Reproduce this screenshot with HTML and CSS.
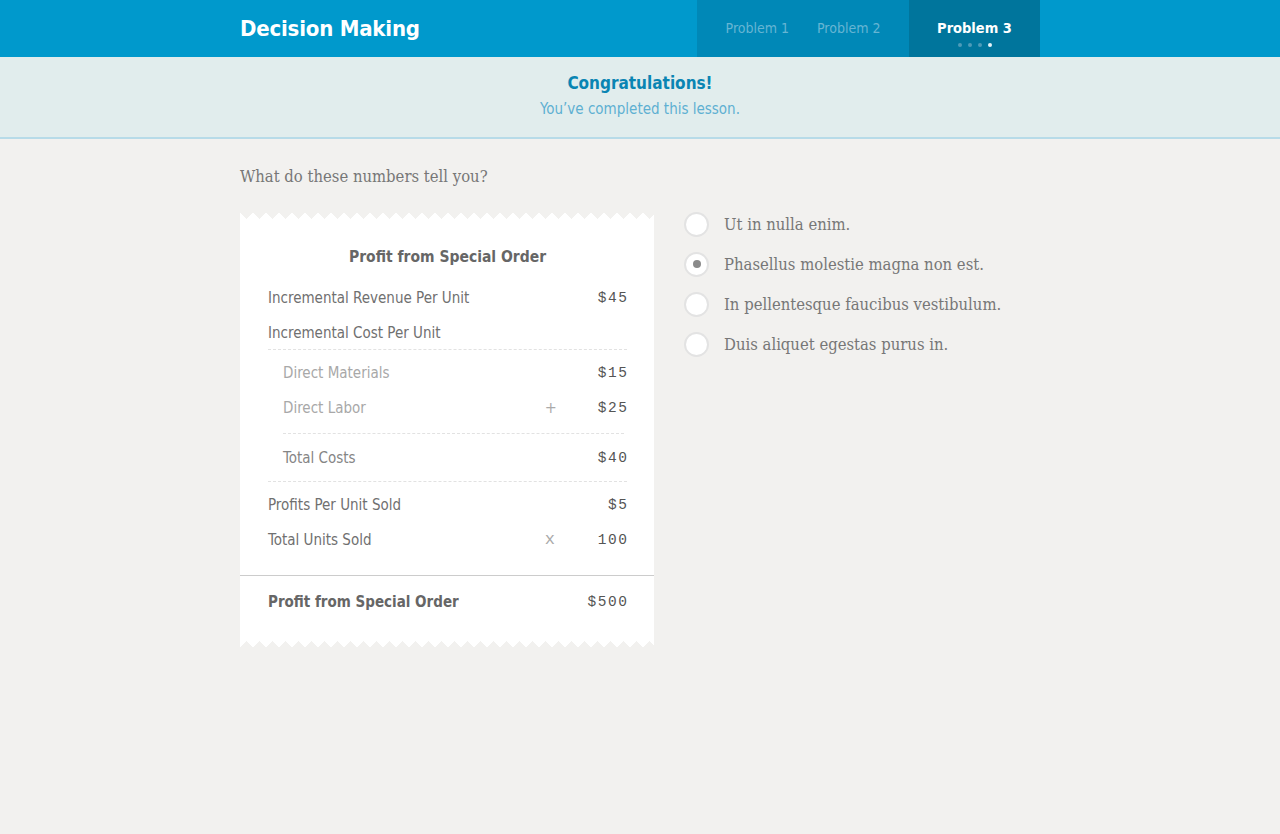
FILE: index.html
```html
<!DOCTYPE html>
<html>
<head>
<meta charset="utf-8">
<link rel="stylesheet" href="styles.css">
</head>
<body>
<header class="topbar">
  <div class="wrap topbar-inner">
    <h1 class="brand">Decision Making</h1>
    <nav class="tabs">
      <div class="tab-group">
        <span class="tab">Problem 1</span>
        <span class="tab">Problem 2</span>
      </div>
      <div class="tab-active">
        <span class="tab-active-label">Problem 3</span>
        <span class="dots"><i></i><i></i><i></i><i class="on"></i></span>
      </div>
    </nav>
  </div>
</header>
<section class="banner">
  <div class="banner-title">Congratulations!</div>
  <div class="banner-sub">You’ve completed this lesson.</div>
</section>
<main class="wrap content">
  <p class="question">What do these numbers tell you?</p>
  <div class="columns">
    <div class="receipt">
      <div class="edge edge-top"></div>
      <div class="receipt-body">
        <div class="receipt-title">Profit from Special Order</div>
        <div class="row"><span class="label">Incremental Revenue Per Unit</span><span class="op"></span><span class="val">$45</span></div>
        <div class="row"><span class="label">Incremental Cost Per Unit</span></div>
        <div class="rule"></div>
        <div class="sub">
          <div class="row light"><span class="label">Direct Materials</span><span class="op"></span><span class="val">$15</span></div>
          <div class="row light"><span class="label">Direct Labor</span><span class="op">+</span><span class="val">$25</span></div>
          <div class="rule sub-rule"></div>
          <div class="row light total"><span class="label">Total Costs</span><span class="op"></span><span class="val">$40</span></div>
        </div>
        <div class="rule"></div>
        <div class="row"><span class="label">Profits Per Unit Sold</span><span class="op"></span><span class="val">$5</span></div>
        <div class="row"><span class="label">Total Units Sold</span><span class="op mult">x</span><span class="val">100</span></div>
      </div>
      <div class="receipt-foot">
        <div class="row bold"><span class="label">Profit from Special Order</span><span class="op"></span><span class="val">$500</span></div>
      </div>
      <div class="edge edge-bottom"></div>
    </div>
    <ul class="options">
      <li class="option"><span class="radio"></span>Ut in nulla enim.</li>
      <li class="option"><span class="radio checked"></span>Phasellus molestie magna non est.</li>
      <li class="option"><span class="radio"></span>In pellentesque faucibus vestibulum.</li>
      <li class="option"><span class="radio"></span>Duis aliquet egestas purus in.</li>
    </ul>
  </div>
</main>
</body>
</html>
```

FILE: styles.css
```css
* { box-sizing: border-box; }
html, body { margin: 0; padding: 0; }
body {
  background: #f2f1ef;
  font-family: "DejaVu Sans Condensed", "DejaVu Sans", sans-serif;
  color: #666;
  min-height: 834px;
}
.wrap { width: 800px; margin: 0 auto; }

.topbar { background: #0099cc; height: 57px; }
.topbar-inner { display: flex; justify-content: space-between; height: 57px; }
.brand {
  margin: 0;
  font-family: "DejaVu Sans Condensed", "DejaVu Sans", sans-serif;
  font-weight: bold;
  font-size: 22px;
  color: #fff;
  line-height: 58px;
  letter-spacing: -0.2px;
}
.tabs { display: flex; height: 57px; }
.tab-group {
  display: flex;
  justify-content: center;
  gap: 28px;
  width: 212px;
  background: #0088b7;
}
.tab {
  color: #66b5d3;
  font-size: 14px;
  line-height: 57px;
}
.tab-active {
  background: #00759c;
  width: 131px;
  display: flex;
  flex-direction: column;
  align-items: center;
}
.tab-active-label {
  color: #fff;
  font-weight: bold;
  font-size: 14.5px;
  margin-top: 19px;
  line-height: 18px;
}
.dots { display: flex; gap: 6px; margin-top: 6px; }
.dots i { width: 4px; height: 4px; border-radius: 50%; background: #4d9bb9; display: block; }
.dots i.on { background: #e6f3f8; }

.banner {
  background: #e1eded;
  border-bottom: 2px solid #b7dbe8;
  height: 82px;
  text-align: center;
  padding-top: 15px;
}
.banner-title {
  color: #0a85b3;
  font-weight: bold;
  font-size: 17px;
  line-height: 22px;
}
.banner-sub {
  color: #5eb0d2;
  font-size: 15px;
  line-height: 20px;
  margin-top: 5px;
}

.content { padding-top: 24px; }
.question {
  margin: 0;
  font-family: "DejaVu Serif Condensed", "DejaVu Serif", serif;
  font-size: 16.5px;
  color: #777;
  line-height: 28px;
}
.columns { display: flex; gap: 30px; margin-top: 21px; align-items: flex-start; }

.receipt { width: 414px; }
.edge { height: 7px; background-size: 13px 14px; background-repeat: repeat-x; }
.edge-top {
  background-image:
    linear-gradient(45deg, #fff 50%, transparent 50%),
    linear-gradient(-45deg, #fff 50%, transparent 50%);
  background-position: 0 0;
}
.edge-bottom {
  background-image:
    linear-gradient(135deg, #fff 50%, transparent 50%),
    linear-gradient(-135deg, #fff 50%, transparent 50%);
  background-position: 0 100%;
}
.receipt-body { background: #fff; padding: 26px 27px 19px 28px; }
.receipt-title {
  text-align: center;
  font-weight: bold;
  font-size: 15.5px;
  color: #666;
  line-height: 24px;
  margin-bottom: 10px;
}
.row {
  display: flex;
  align-items: center;
  height: 35px;
  padding-top: 2px;
  font-size: 15px;
  color: #707070;
}
.label { flex: 1; }
.op {
  width: 30px;
  text-align: left;
  color: #aaa;
  font-size: 16px;
  margin-right: 23px;
}
.op.mult { font-family: "Liberation Mono", "DejaVu Sans Mono", monospace; font-size: 17px; }
.val {
  font-family: "Liberation Mono", "Courier New", monospace;
  font-size: 14.5px;
  letter-spacing: 1.6px;
  margin-right: -1.6px;
  color: #555;
  text-align: right;
}
.rule { border-top: 1px dashed #e2e2e2; }
.sub { padding: 4px 0 7px 15px; }
.sub-rule { margin: 9px 3px 5px 0; }
.row.light { color: #a8a8a8; }
.row.light.total { color: #858585; }
.rule + .row { margin-top: 4px; }
.receipt-foot {
  background: #fff;
  border-top: 1px solid #cccccc;
  padding: 8px 27px 22px 28px;
}
.row.bold { font-weight: bold; color: #666; padding-top: 0; }
.row.bold .val { font-weight: normal; }

.options { list-style: none; margin: -8px 0 0; padding: 0; }
.option {
  display: flex;
  align-items: center;
  height: 40px;
  font-family: "DejaVu Serif Condensed", "DejaVu Serif", serif;
  font-size: 16.5px;
  color: #777;
}
.radio {
  width: 25px;
  height: 25px;
  border-radius: 50%;
  background: #fff;
  border: 2px solid #e3e3e3;
  margin-right: 15px;
  display: flex;
  align-items: center;
  justify-content: center;
}
.radio.checked::after {
  content: "";
  width: 8px;
  height: 8px;
  border-radius: 50%;
  background: #8a8a8a;
}
```
